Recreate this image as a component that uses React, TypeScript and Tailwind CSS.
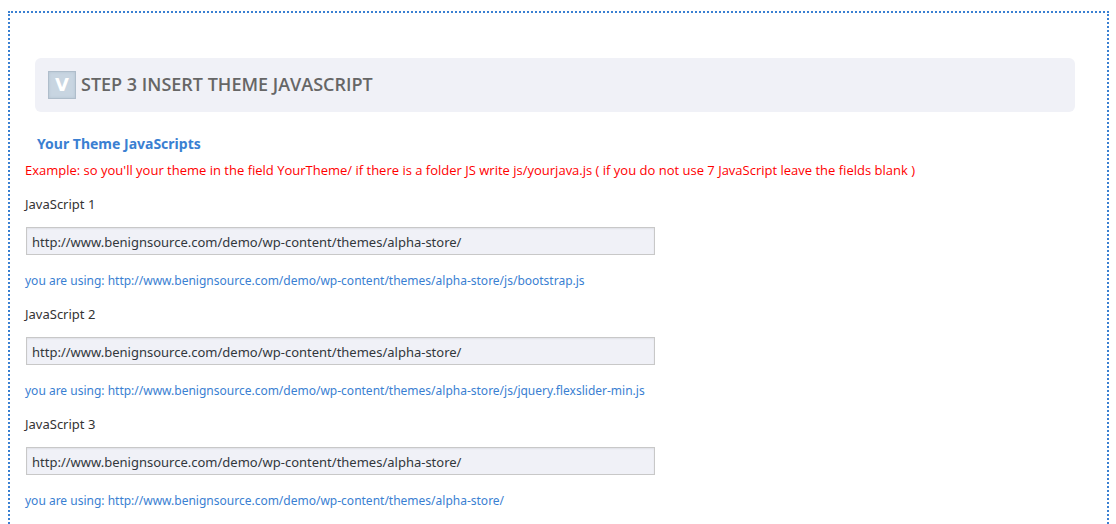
type ScriptField = { id: string; label: string; value: string; current: string };

const BASE = "http://www.benignsource.com/demo/wp-content/themes/alpha-store/";

const fields: ScriptField[] = [
  { id: "js-1", label: "JavaScript 1", value: BASE, current: BASE + "js/bootstrap.js" },
  { id: "js-2", label: "JavaScript 2", value: BASE, current: BASE + "js/jquery.flexslider-min.js" },
  { id: "js-3", label: "JavaScript 3", value: BASE, current: BASE },
];

function Field({ id, label, value, current }: ScriptField) {
  return (
    <div className="flex flex-col items-start">
      <label htmlFor={id} className="text-[13px] leading-5 text-[#333]">
        {label}
      </label>
      <input
        id={id}
        type="text"
        defaultValue={value}
        className="mt-[13px] ml-px h-7 w-full max-w-[629px] border border-[#c8c8c8] bg-[#f0f1f7] px-[5px] pt-px text-[13px] text-[#32373c] shadow-[inset_0_1px_2px_rgba(0,0,0,0.07)] outline-none"
      />
      <p className="mt-4 text-xs leading-5 text-[#3a80d2]">you are using: {current}</p>
    </div>
  );
}

export default function App() {
  return (
    <div className="flex min-h-screen flex-col bg-white pt-[11px] pr-[7px] pl-2 font-['Noto_Sans','Open_Sans',sans-serif]">
      <main className="flex-1 border-2 border-b-0 border-dotted border-[#3a80d2] px-[15px] pt-[45px]">
        <header className="mr-[17px] ml-[10px] flex h-[54px] items-center gap-[5px] rounded-md bg-[#f0f1f7] px-[13px] font-['Open_Sans','Noto_Sans',sans-serif]">
          <span className="flex size-7 items-center justify-center border border-[#afbdcb] bg-[#c8d5e1] font-['DejaVu_Sans',sans-serif] text-lg leading-none font-bold text-white shadow-[inset_0_0_3px_#b4c3d1]">
            V
          </span>
          <h1 className="pb-0.5 text-lg font-semibold text-[#666]">STEP 3 INSERT THEME JAVASCRIPT</h1>
        </header>
        <h2 className="mt-[22px] ml-3 text-sm leading-5 font-bold text-[#3a80d2]">Your Theme JavaScripts</h2>
        <p className="mt-[6px] font-['Open_Sans','Noto_Sans',sans-serif] text-[13px] leading-5 text-[#ff0000]">
          Example: so you'll your theme in the field YourTheme/ if there is a folder JS write js/yourjava.js ( if you do
          not use 7 JavaScript leave the fields blank )
        </p>
        <form className="mt-[14px] flex flex-col gap-[13px]">
          {fields.map((f) => (
            <Field key={f.id} {...f} />
          ))}
        </form>
      </main>
    </div>
  );
}
